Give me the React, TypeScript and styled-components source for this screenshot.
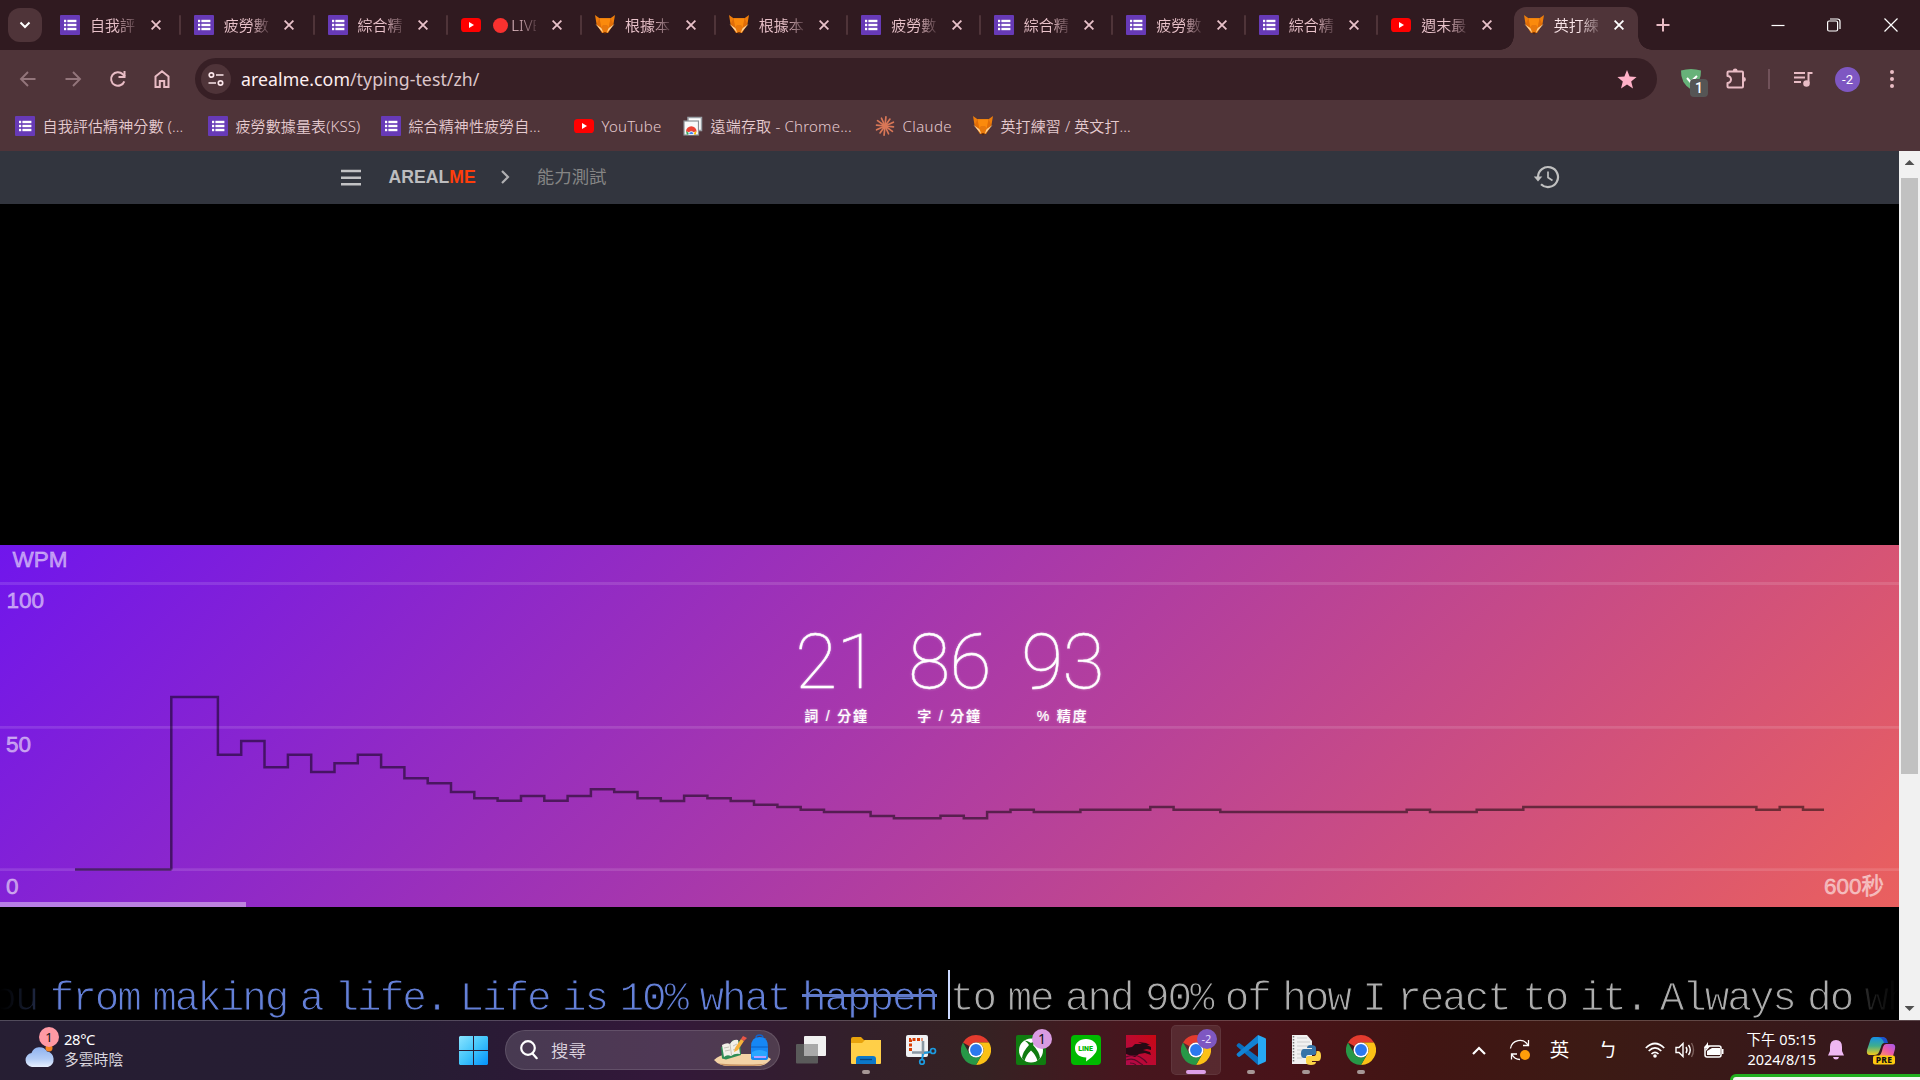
import React from "react";
import styled, { createGlobalStyle, css } from "styled-components";

const ui = `"Noto Sans", "Noto Sans CJK TC", sans-serif`;
const arial = `"Liberation Sans", "Noto Sans CJK TC", sans-serif`;

const Global = createGlobalStyle`
  * { box-sizing: border-box; }
  html, body { margin: 0; padding: 0; background: #000; overflow: hidden; }
  svg { display: block; flex: none; }
`;

const Screen = styled.div`
  position: relative;
  width: 1920px;
  height: 1080px;
  display: flex;
  flex-direction: column;
  overflow: hidden;
  font-family: ${ui};
  background: #000;
`;

/* ---------- browser chrome ---------- */

const TabStrip = styled.div`
  height: 50px;
  flex: none;
  display: flex;
  align-items: stretch;
  background: #301a20;
`;

const TabSearch = styled.div`
  width: 34px;
  height: 34px;
  margin: 8px 6px 0 8px;
  border-radius: 12px;
  background: #4f3439;
  display: flex;
  align-items: center;
  justify-content: center;
`;

const TabSlot = styled.div<{ $w: number; $sep?: boolean }>`
  width: ${(p) => p.$w}px;
  flex: none;
  padding: 0 1px 0 12px;
  display: flex;
  align-items: center;
  position: relative;
  &::after {
    content: "";
    display: ${(p) => (p.$sep ? "block" : "none")};
    width: 2px;
    height: 20px;
    margin-left: auto;
    border-radius: 1px;
    background: #4f3439;
  }
`;

const ActiveTab = styled.div`
  width: 124px;
  margin: 7px 0 0 2px;
  padding-left: 10px;
  display: flex;
  align-items: center;
  padding-bottom: 7px;
  flex: none;
  position: relative;
  background: #4f3439;
  border-radius: 12px 12px 0 0;
  &::before,
  &::after {
    content: "";
    position: absolute;
    bottom: 0;
    width: 14px;
    height: 14px;
  }
  &::before {
    left: -14px;
    background: radial-gradient(circle at 0 0, transparent 13.5px, #4f3439 14px);
  }
  &::after {
    right: -14px;
    background: radial-gradient(circle at 100% 0, transparent 13.5px, #4f3439 14px);
  }
`;

const TabTitle = styled.div<{ $active?: boolean }>`
  width: 45px;
  margin: 0 15.5px 0 10px;
  height: 24px;
  line-height: 24px;
  overflow: hidden;
  white-space: nowrap;
  font-size: 15px;
  font-weight: 350;
  color: ${(p) => (p.$active ? "#fbe6ea" : "#e9c2ca")};
  mask-image: linear-gradient(90deg, #000 60%, rgba(0, 0, 0, 0.2) 100%);
`;

const LiveDot = styled.i`
  display: inline-block;
  width: 15px;
  height: 15px;
  margin: 0 3px 0 2px;
  border-radius: 50%;
  background: #f8312f;
  vertical-align: -2px;
`;

const NewTab = styled.div`
  margin-left: 18.5px;
  display: flex;
  align-items: center;
`;

const WindowButtons = styled.div`
  margin-left: auto;
  padding: 0 22px 1px 0;
  display: flex;
  align-items: center;
  gap: 42.6px;
`;

const Toolbar = styled.div`
  height: 58px;
  flex: none;
  display: flex;
  align-items: center;
  background: #4f3439;
`;

const NavButtons = styled.div`
  width: 195px;
  padding-left: 17px;
  display: flex;
  gap: 22.8px;
  align-items: center;
`;

const Omnibox = styled.div`
  width: 1462px;
  height: 42px;
  border-radius: 21px;
  padding: 0 20px 0 6px;
  display: flex;
  align-items: center;
  background: #371f25;
`;

const SiteInfo = styled.div`
  width: 30px;
  height: 30px;
  border-radius: 50%;
  background: #4f3439;
  display: flex;
  align-items: center;
  justify-content: center;
`;

const Url = styled.div`
  flex: 1;
  margin-left: 10px;
  font-size: 17.7px;
  line-height: 24px;
  letter-spacing: 0.06px;
  color: #fdeef0;
  span {
    color: #dcc6ca;
  }
`;

const ToolbarTools = styled.div`
  flex: 1;
  display: flex;
  align-items: center;
  padding-left: 23px;
`;

const ShieldBox = styled.div`
  position: relative;
  width: 22px;
  height: 22px;
  margin-right: 23px;
`;

const ShieldCount = styled.div`
  position: absolute;
  left: 10px;
  top: 11px;
  width: 18px;
  height: 18px;
  border-radius: 4px;
  background: #555;
  color: #fff;
  font: 500 14px/18px Roboto, sans-serif;
  text-align: center;
`;

const ToolDivider = styled.div`
  width: 2px;
  height: 20px;
  margin: 0 23px 0 21px;
  background: #71525a;
`;

const Avatar = styled.div`
  width: 25px;
  height: 25px;
  margin: 0 22px;
  border-radius: 50%;
  background: #7e57c2;
  color: #fff;
  font: 400 13px/25px Roboto, sans-serif;
  text-align: center;
`;

const BookmarkBar = styled.div`
  height: 43px;
  flex: none;
  padding: 0 0 7px 15px;
  display: flex;
  align-items: center;
  background: #4f3439;
`;

const Bookmark = styled.div<{ $w: number; $ls: number }>`
  width: ${(p) => p.$w}px;
  flex: none;
  display: flex;
  align-items: center;
  gap: 7.5px;
  font-size: 15px;
  font-weight: 350;
  line-height: 22px;
  letter-spacing: ${(p) => p.$ls}px;
  white-space: nowrap;
  color: #e6cbd0;
`;

/* ---------- page ---------- */

const Viewport = styled.div`
  height: 869px;
  flex: none;
  display: flex;
`;

const Page = styled.main`
  width: 1899px;
  display: flex;
  flex-direction: column;
  background: #000;
`;

const SiteNav = styled.nav`
  height: 53px;
  flex: none;
  padding: 0 339px 1px 340.5px;
  display: flex;
  align-items: center;
  background: #32353e;
`;

const Brand = styled.div`
  margin: 0 25.5px 1px 28px;
  font: 700 17.6px/24px ${arial};
  letter-spacing: 0.05px;
  color: #bdbdbf;
  span {
    color: #ff3d0a;
  }
`;

const Crumb = styled.div`
  margin: 0 auto 1px 26.5px;
  font: 400 17.4px/24px ${arial};
  color: #858585;
`;

const AdSpace = styled.div`
  height: 341px;
  flex: none;
`;

const ChartPanel = styled.section`
  height: 362px;
  flex: none;
  display: grid;
  background: linear-gradient(135deg, #7016ec 0%, #ea605e 100%);
  > * {
    grid-area: 1 / 1;
  }
`;

const ChartSvg = styled.svg`
  width: 1899px;
  height: 362px;
  text {
    font: 400 22.5px ${arial};
    fill: rgba(255, 255, 255, 0.5);
    stroke: rgba(255, 255, 255, 0.4);
    stroke-width: 0.8px;
  }
`;

const Stats = styled.div`
  justify-self: center;
  align-self: start;
  padding-top: 71.5px;
  display: flex;
`;

const Stat = styled.div`
  width: 113px;
  display: flex;
  flex-direction: column;
  align-items: center;
  color: #fff;
  text-shadow: 0 0 3px rgba(255, 255, 255, 0.45);
  strong {
    font: 100 76.5px/90px Roboto, sans-serif;
    letter-spacing: -0.6px;
    -webkit-text-stroke: 0.4px #fff;
  }
  small {
    margin-top: -0.5px;
    font: 500 14px/20px "Liberation Sans", "Noto Sans CJK TC", sans-serif;
    -webkit-text-stroke: 0.2px #fff;
    letter-spacing: 1.8px;
    white-space: nowrap;
  }
`;

const Elapsed = styled.div`
  align-self: end;
  width: 246px;
  height: 5px;
  background: rgba(255, 255, 255, 0.42);
`;

const TypingLine = styled.div`
  margin-top: 63px;
  height: 50px;
  display: grid;
  grid-template-columns: 948px 2px 949px;
  white-space: pre;
  font: 400 41px/50px "Liberation Mono", monospace;
  letter-spacing: -2.1px;
  word-spacing: -10.05px;
  -webkit-text-stroke: 1.05px #000;
  overflow: hidden;
  mask-image: linear-gradient(
    90deg,
    transparent 0,
    rgba(0, 0, 0, 0.1) 15px,
    rgba(0, 0, 0, 0.3) 36px,
    #000 50px,
    #000 1848px,
    rgba(0, 0, 0, 0.25) 1864px,
    rgba(0, 0, 0, 0.1) 1884px,
    transparent 1899px
  );
`;

const Typed = styled.div`
  display: flex;
  justify-content: flex-end;
  padding: 4px 11px 0 0;
  overflow: hidden;
  color: #6480d8;
`;

const Missed = styled.span`
  position: relative;
  &::after {
    content: "";
    position: absolute;
    left: 0;
    right: 0;
    top: 20px;
    height: 3px;
    background: #5f79c9;
  }
`;

const Caret = styled.div`
  height: 49px;
  background: #cddaff;
`;

const Upcoming = styled.div`
  padding-top: 4px;
  overflow: hidden;
  color: #adadad;
`;

const Scrollbar = styled.div`
  width: 21px;
  display: flex;
  flex-direction: column;
  align-items: center;
  justify-content: space-between;
  background: #f1f1f1;
`;

const Thumb = styled.div`
  width: 17px;
  height: 596px;
  margin: -1px 0 auto;
  background: #c1c1c1;
`;

const Arrow = styled.div<{ $down?: boolean }>`
  width: 10px;
  height: 5px;
  margin: ${(p) => (p.$down ? "0 0 9px" : "9px 0 14px")};
  background: #505050;
  clip-path: ${(p) => (p.$down ? "polygon(0 0, 100% 0, 50% 100%)" : "polygon(50% 0, 100% 100%, 0 100%)")};
`;

/* ---------- taskbar ---------- */

const Taskbar = styled.footer`
  height: 60px;
  flex: none;
  display: flex;
  align-items: center;
  padding-bottom: 1px;
  border-top: 1px solid rgba(255, 255, 255, 0.2);
  background: linear-gradient(
    90deg,
    #261e33 0,
    #261d33 400px,
    #2c1936 540px,
    #33183a 660px,
    #33202a 860px,
    #352223 980px,
    #46161e 1120px,
    #481319 1280px,
    #411513 1420px,
    #3c1a14 1600px,
    #36181c 1860px,
    #33181e 1920px
  );
  color: #fff;
`;

const Weather = styled.div`
  width: 459px;
  padding-left: 24px;
  display: flex;
  gap: 8px;
  font-size: 14.8px;
  line-height: 20px;
`;

const WeatherIcon = styled.div`
  position: relative;
  width: 32px;
  height: 40px;
  padding-top: 12px;
`;

const WeatherBadge = styled.div`
  position: absolute;
  left: 15px;
  top: -3px;
  width: 20px;
  height: 20px;
  border-radius: 50%;
  background: #ff99a4;
  color: #111;
  font-size: 13px;
  line-height: 20px;
  text-align: center;
`;

const WeatherText = styled.div`
  margin-top: -1px;
  div:first-child {
    letter-spacing: -0.4px;
  }
  div + div {
    color: #d9d5dd;
  }
`;

const SearchBox = styled.div`
  width: 275px;
  height: 40px;
  margin: 0 3px 0 17px;
  padding: 0 7px 0 14px;
  border-radius: 20px;
  border: 1px solid rgba(255, 255, 255, 0.12);
  background: rgba(255, 255, 255, 0.14);
  display: flex;
  align-items: center;
  gap: 13px;
  font-size: 17.5px;
  line-height: 22px;
  font-weight: 350;
  color: #dcd3df;
  svg:last-child {
    margin-left: auto;
  }
`;

const AppButton = styled.div<{ $active?: boolean }>`
  position: relative;
  width: 55px;
  height: 50px;
  display: flex;
  align-items: center;
  justify-content: center;
  ${(p) =>
    p.$active &&
    css`
      width: 50px;
      margin: 0 2.5px;
      border-radius: 5px;
      background: rgba(255, 255, 255, 0.09);
      box-shadow: inset 0 0 0 1px rgba(255, 255, 255, 0.06);
    `}
`;

const Running = styled.div<{ $active?: boolean }>`
  position: absolute;
  bottom: 1px;
  width: ${(p) => (p.$active ? 20 : 8)}px;
  height: 4px;
  border-radius: 2px;
  background: ${(p) => (p.$active ? "#dda0e8" : "#a69796")};
`;

const AppBadge = styled.div<{ $dark?: boolean }>`
  position: absolute;
  left: ${(p) => (p.$dark ? 26 : 29)}px;
  top: 4px;
  width: 20px;
  height: 20px;
  border-radius: 50%;
  background: ${(p) => (p.$dark ? "#7e57c2" : "#d99be2")};
  color: ${(p) => (p.$dark ? "#e8dcff" : "#111")};
  font-size: ${(p) => (p.$dark ? 11 : 14)}px;
  line-height: 20px;
  text-align: center;
`;

const Tray = styled.div`
  margin-left: auto;
  display: flex;
  align-items: center;
`;

const TrayItem = styled.div<{ $w: number }>`
  width: ${(p) => p.$w}px;
  display: flex;
  justify-content: center;
  font-size: 19.5px;
  line-height: 28px;
`;

const Clock = styled.div`
  width: 85px;
  margin: -2px 9px 0 0;
  text-align: right;
  font-size: 14.5px;
  line-height: 20px;
  letter-spacing: -0.05px;
  white-space: nowrap;
`;

const Toast = styled.div`
  position: absolute;
  left: 1730px;
  top: 1074px;
  width: 200px;
  height: 20px;
  border: 3px solid #22b020;
  border-radius: 6px;
  background: #f6f8f5;
`;

/* ---------- icons ---------- */

const FormsIcon = () => (
  <svg width="20" height="20" viewBox="0 0 20 20">
    <rect width="20" height="20" rx="1" fill="#673ab7" />
    <g fill="#fff">
      <rect x="4" y="4.8" width="2.2" height="2.4" />
      <rect x="4" y="8.8" width="2.2" height="2.4" />
      <rect x="4" y="12.8" width="2.2" height="2.4" />
      <rect x="7.4" y="4.8" width="9" height="2.4" />
      <rect x="7.4" y="8.8" width="9" height="2.4" />
      <rect x="7.4" y="12.8" width="9" height="2.4" />
    </g>
  </svg>
);

const YoutubeIcon = () => (
  <svg width="20" height="20" viewBox="0 0 20 20">
    <rect y="3" width="20" height="14" rx="3.6" fill="#f00" />
    <path d="M8 7v6l5-3z" fill="#fff" />
  </svg>
);

const FoxIcon = () => (
  <svg width="20" height="20" viewBox="0 0 20 20">
    <path d="M0 0l4.500 3.200h11L20 0l-1.600 9.500-5.400 8.500h-6L1.600 9.500z" fill="#ee7d0c" />
    <path d="M4.500 3.200h11l-1.500 9L10 18 6 12.200z" fill="#fb8a0c" />
    <path d="M4.500 3.200L1.600 9.500 6.300 13zM15.500 3.200l2.900 6.300-4.700 3.500z" fill="#e06d08" />
    <path d="M.4 9L6.500 13.200 8.300 18zM19.600 9L13.500 13.200 11.700 18z" fill="#fbd39c" />
    <path d="M6 12.200L10 18l4-5.800L12 10H8z" fill="#e8780c" />
    <path d="M8.300 17.200h3.400L10.600 19.300H9.400z" fill="#5a2408" />
  </svg>
);

const RemoteIcon = () => (
  <svg width="20" height="20" viewBox="0 0 20 20">
    <rect x="5" y="1.500" width="13.500" height="13" fill="#fff" stroke="#9aa0a6" strokeWidth="1.500" />
    <rect x="1" y="5" width="14.500" height="14" fill="#f8f9fa" stroke="#8a8f94" strokeWidth="1.200" />
    <path d="M3 15.500a5.300 5.300 0 0110.600 0l-5.300 1z" fill="#ea4335" />
    <path d="M3 15L8 18.500H3.800z" fill="#34a853" />
    <path d="M13.600 15L8.500 18.500h4.300z" fill="#fbbc05" />
    <path d="M5.700 18.500a2.600 3 0 015.200 0z" fill="#4285f4" stroke="#fff" strokeWidth=".8" />
  </svg>
);

const ClaudeIcon = () => (
  <svg width="20" height="20" viewBox="0 0 20 20" stroke="#d97757" strokeWidth="1.700" strokeLinecap="round">
    {Array.from({ length: 12 }, (_, i) => {
      const a = (i * Math.PI) / 6 + 0.1;
      const r = i % 2 ? 9.2 : 8.5;
      return <line key={i} x1="10" y1="10" x2={10 + r * Math.cos(a)} y2={10 + r * Math.sin(a)} />;
    })}
  </svg>
);

const CloseIcon = ({ active = false }: { active?: boolean }) => (
  <svg width="10" height="10" viewBox="0 0 10 10" stroke={active ? "#fff" : "#e9c2ca"} strokeWidth="1.800">
    <path d="M.6.6l8.800 8.800M9.400.6L.6 9.400" />
  </svg>
);

const ChromeIcon = () => (
  <svg width="30" height="30" viewBox="0 0 48 48">
    <path d="M24 0a24 24 0 0120.800 12H24a12 12 0 00-10.400 6L3.200 12A24 24 0 0124 0z" fill="#e33b2e" />
    <path d="M44.800 12A24 24 0 0124 48l10.400-18A12 12 0 0034.400 18 12 12 0 0024 12z" fill="#fbc116" />
    <path d="M3.200 12l10.400 18A12 12 0 0024 36a12 12 0 0010.400-6L24 48A24 24 0 013.200 12z" fill="#279847" />
    <circle cx="24" cy="24" r="12" fill="#fff" />
    <circle cx="24" cy="24" r="9.500" fill="#2b78ee" />
  </svg>
);

const CloudIcon = () => (
  <svg width="31" height="26" viewBox="0 0 31 26">
    <defs>
      <linearGradient id="cloud" x1="0" y1="0" x2="0" y2="1">
        <stop offset="0" stopColor="#8fb2ee" />
        <stop offset=".6" stopColor="#b4cdf6" />
        <stop offset="1" stopColor="#e8f0ff" />
      </linearGradient>
    </defs>
    <circle cx="25" cy="6" r="3.500" fill="#f58220" />
    <path d="M8 25a7 7 0 01-.5-13.900A8.500 8.500 0 0123 9.500 8 8 0 0124 25z" fill="url(#cloud)" />
  </svg>
);

const StartIcon = () => (
  <svg width="29" height="29" viewBox="0 0 29 29">
    <defs>
      <linearGradient id="win" x1="0" y1="0" x2="1" y2="1">
        <stop offset="0" stopColor="#8ae4ff" />
        <stop offset=".5" stopColor="#41c4fb" />
        <stop offset="1" stopColor="#0391fb" />
      </linearGradient>
    </defs>
    <path d="M1 0h13v14H0V1zM15 0h13l1 1v13H15zM0 15h14v14H1l-1-1zM15 15h14v13l-1 1H15z" fill="url(#win)" />
  </svg>
);

const SearchArt = () => (
  <svg width="58" height="32" viewBox="0 0 58 32">
    <path d="M0 26Q5 21 14 20h30q8 1 13 5-5 7-14 7H16Q5 32 0 26z" fill="#f3d3a6" />
    <path d="M4 29.500q24 2 48 0-5 2.500-12 2.500H16q-7 0-12-2.500z" fill="#c99565" />
    <path d="M7 13l9-3 3-4 7 1 1 14-15 4.500-4-1z" fill="#2f8d56" />
    <path d="M8 11q5-3 8-1 3-5 8-4l2 14q-5-1-9 2-4-2-7 1z" fill="#f2f0e8" />
    <path d="M16 10l1.500 11M10 14l5-1M11 17l5-1M19 12l4-2M19 16l5-2" stroke="#b9b5aa" strokeWidth=".8" />
    <path d="M21 14l6-9 3 2-6 9-4 2z" fill="#f6b13c" />
    <path d="M27 5l2-3 4 2-3 3z" fill="#ea5546" />
    <path d="M42 4q0-3 3.500-3T49 4" fill="none" stroke="#1462c8" strokeWidth="1.500" />
    <path d="M37 13q0-10 8.500-10T54 13v11q0 2-3 2H40q-3 0-3-2z" fill="#1687f5" />
    <path d="M38 18q7.500-4 15 0v5H38z" fill="#29a6ff" />
    <path d="M37 13h17" stroke="#0c5cc0" />
    <path d="M40 23h12" stroke="#b8a0ff" strokeWidth="2" />
  </svg>
);

const TaskViewIcon = () => (
  <svg width="30" height="30" viewBox="0 0 30 30">
    <rect x="8" y="1" width="22" height="20" rx="1" fill="#f1f1f1" />
    <rect x="0" y="9" width="22" height="19.500" rx="1" fill="#5a5a5a" />
    <rect x="8" y="9" width="14" height="12" fill="#a9a9a9" />
  </svg>
);

const FolderIcon = () => (
  <svg width="30" height="30" viewBox="0 0 30 30">
    <path d="M0 4q0-2 2-2h8l3 3h15q2 0 2 2v4H0z" fill="#e8a30c" />
    <path d="M0 8h11l3-3h16v23q0 1-1 1H1q-1 0-1-1z" fill="#ffcf48" />
    <path d="M5 29v-5q0-3 3-3h14q3 0 3 3v5z" fill="#0c78c8" />
    <path d="M9 24.500h12" stroke="#06447e" strokeWidth="1.300" />
  </svg>
);

const SnipIcon = () => (
  <svg width="32" height="30" viewBox="0 0 32 30">
    <rect x="1" y="0" width="22" height="22" rx="2" fill="#f0f2f4" />
    <path d="M5.500 16V4.500h12" fill="none" stroke="#d83b01" strokeWidth="3" strokeDasharray="3 1.500" />
    <path d="M18 6v14M7 17.500h16" stroke="#8b98a3" strokeWidth="2.600" fill="none" />
    <path d="M19 18l7-1M18 19l-1 6" stroke="#1c9be0" strokeWidth="2" />
    <circle cx="28" cy="16" r="2.500" fill="none" stroke="#1c9be0" strokeWidth="1.700" />
    <circle cx="17" cy="27" r="2.300" fill="none" stroke="#1c9be0" strokeWidth="1.700" />
  </svg>
);

const XboxIcon = () => (
  <svg width="30" height="30" viewBox="0 0 30 30">
    <rect width="30" height="30" rx="2" fill="#107c10" />
    <circle cx="15" cy="15.500" r="12" fill="#fff" />
    <path
      d="M7.500 5.500Q11 5 15 8q4-3 7.500-2.500-2.500 0-5.500 4.500 6.500 7 7 13l-2.500 3Q20 20 15 15.500 10 20 8.500 26L6 23q.5-6 7-13-3-4.500-5.500-4.500z"
      fill="#107c10"
    />
  </svg>
);

const LineBox = styled.div`
  width: 30px;
  height: 30px;
  border-radius: 4px;
  background: #00b900;
  display: grid;
  place-items: center;
  > * {
    grid-area: 1 / 1;
  }
  span {
    font: 900 7px/8px Roboto, sans-serif;
    color: #00b900;
    margin-top: -3px;
  }
`;

const LineIcon = () => (
  <LineBox>
    <svg width="24" height="24" viewBox="0 0 24 24">
      <path d="M12 1c6.500 0 11 4 11 9.200 0 5-5.500 9.300-11 13.300l.3-4C5.500 19.500 1 15.500 1 10.200 1 5 5.500 1 12 1z" fill="#fff" />
    </svg>
    <span>LINE</span>
  </LineBox>
);

const DragonIcon = () => (
  <svg width="30" height="30" viewBox="0 0 30 30">
    <defs>
      <linearGradient id="drg" x1="0" y1="1" x2="1" y2="0">
        <stop offset="0" stopColor="#b00a4c" />
        <stop offset="1" stopColor="#c80812" />
      </linearGradient>
    </defs>
    <rect width="30" height="30" fill="url(#drg)" />
    <path d="M0 13l6-1 3-3 7 0-4-2 8 1 4 2-3 0 4 2v3l-4-1-4 1 7 2 1 3-6-2-6 1-4 3-9-3z" fill="#260a14" />
    <path d="M0 22q9-3 14 0t7 6M0 25q7-2 11 1t6 4M4 28q4 0 6 2" stroke="#5a0a28" strokeWidth="1.200" fill="none" />
  </svg>
);

const CodeIcon = () => (
  <svg width="30" height="30" viewBox="0 0 30 30">
    <path d="M22 0v30L1 11.500q-1-1 0-2l1-1q1-.8 2 0L22 22z" fill="#0a6fbe" />
    <path d="M22 30V0L1 18.500q-1 1 0 2l1 1q1 .8 2 0L22 8z" fill="#1283d4" />
    <path d="M22 0l7 3q1 .4 1 1.500v21q0 1-1 1.500l-7 3z" fill="#27a9f3" />
  </svg>
);

const PythonIcon = () => (
  <svg width="30" height="30" viewBox="0 0 30 30">
    <path d="M1 0h15l5 6v23H1z" fill="#f1f1f1" />
    <path d="M2.500 1v27" stroke="#777" strokeWidth="1.500" strokeDasharray="1.500 1.500" />
    <path d="M6 3h10M6 7h13M6 11h13M6 15h9M6 19h5M6 23h5" stroke="#cdcdcd" />
    <path d="M20 10q5 0 5 3v5q0 2-3 2h-5q-2 0-2 3h-2q-3 0-3-4.500T13 14h8v-1h-5q0-3 4-3z" fill="#3774a8" />
    <path d="M20 30q-5 0-5-3v-4q0-2 3-2h5q2.500 0 2.500-5H27q3 0 3 5t-3 5h-6v1h4q0 3-5 3z" fill="#fdd446" />
  </svg>
);

const CopilotIcon = () => (
  <svg width="30" height="30" viewBox="0 0 30 30">
    <defs>
      <linearGradient id="cpA" x1="0" y1="0" x2="0" y2="1">
        <stop offset="0" stopColor="#168fe6" />
        <stop offset=".5" stopColor="#3fae8c" />
        <stop offset="1" stopColor="#f6cb1a" />
      </linearGradient>
      <linearGradient id="cpB" x1="1" y1="0" x2="0" y2="1">
        <stop offset="0" stopColor="#a259f0" />
        <stop offset=".5" stopColor="#ec5aa8" />
        <stop offset="1" stopColor="#ff9a5a" />
      </linearGradient>
    </defs>
    <path d="M8 2h8q4 0 5 6-5-1-6 4l-2 5q-1 3-5 3H4q-4 0-3-5L4 6q1-4 4-4z" fill="url(#cpA)" />
    <path d="M12 2h5q4 0 5 6h-4q-1-5-6-6z" fill="#1c52cf" />
    <path d="M20 9h6q4 0 3 5l-2 7H13q2-1 3-5l1-4q1-3 3-3z" fill="url(#cpB)" />
    <rect x="7" y="20.500" width="22" height="9" rx="2" fill="#fdc90f" />
    <text x="18" y="28.200" fontSize="8.500" fontWeight="800" textAnchor="middle" fill="#111" fontFamily="Noto Sans" letterSpacing=".3">PRE</text>
  </svg>
);

/* ---------- data ---------- */

type Fav = "form" | "yt" | "fox" | "remote" | "claude";
const favicon: Record<Fav, React.ReactNode> = {
  form: <FormsIcon />,
  yt: <YoutubeIcon />,
  fox: <FoxIcon />,
  remote: <RemoteIcon />,
  claude: <ClaudeIcon />,
};

const tabs: { icon: Fav; title: string; live?: boolean }[] = [
  { icon: "form", title: "自我評" },
  { icon: "form", title: "疲勞數" },
  { icon: "form", title: "綜合精" },
  { icon: "yt", title: "LIVE", live: true },
  { icon: "fox", title: "根據本" },
  { icon: "fox", title: "根據本" },
  { icon: "form", title: "疲勞數" },
  { icon: "form", title: "綜合精" },
  { icon: "form", title: "疲勞數" },
  { icon: "form", title: "綜合精" },
  { icon: "yt", title: "週末最" },
];

const bookmarks: { icon: Fav; label: string; w: number; ls: number }[] = [
  { icon: "form", label: "自我評估精神分數 (...", w: 193, ls: 0.14 },
  { icon: "form", label: "疲勞數據量表(KSS)", w: 173, ls: 0.12 },
  { icon: "form", label: "綜合精神性疲勞自...", w: 193, ls: 0.1 },
  { icon: "yt", label: "YouTube", w: 109, ls: 0.2 },
  { icon: "remote", label: "遠端存取 - Chrome...", w: 192, ls: 0.2 },
  { icon: "claude", label: "Claude", w: 98, ls: 0.4 },
  { icon: "fox", label: "英打練習 / 英文打...", w: 170, ls: 0.1 },
];

// Each entry is [interval index, chart y]; the speed holds until the next entry.
const speed: [number, number][] = [
  [0, 152], [2, 209.7], [3, 196], [4, 222.3], [5, 209.7], [6, 227], [7, 218.3], [8, 209.7],
  [9, 222.3], [10, 233.3], [11, 238.3], [12, 247], [13, 253.3], [14, 255.7], [15, 251],
  [16, 255.7], [17, 251], [18, 244.3], [19, 247], [20, 253.3], [21, 256], [22, 250.7],
  [23, 253.3], [24, 256], [25, 259.7], [26, 262], [27, 264.7], [28, 267], [30, 271],
  [31, 273.3], [33, 270.7], [34, 273.3], [35, 267], [36, 264.7], [37, 267], [39, 264.7],
  [42, 262], [43, 264.7], [45, 267], [53, 264.7], [54, 267], [56, 264.7], [58, 262],
  [68, 264.7], [69, 262], [70, 264.7],
];
const speedPath =
  "M75 324.500H171.500" + speed.map(([k, y]) => `H${(171.3 + k * 23.31).toFixed(1)}V${y}`).join("") + "H1824";

const stats = [
  ["21", "詞 / 分鐘"],
  ["86", "字 / 分鐘"],
  ["93", "% 精度"],
];

/* ---------- app ---------- */

const pink = "#e9bcc5";

export default function App() {
  return (
    <Screen>
      <Global />
      <TabStrip>
        <TabSearch>
          <svg width="12" height="8" viewBox="0 0 12 8" fill="none" stroke="#fff" strokeWidth="2">
            <path d="M1.500 1.500L6 6l4.500-4.500" />
          </svg>
        </TabSearch>
        {tabs.map((t, i) => (
          <TabSlot key={i} $w={i < 5 ? 133.75 : 132.5} $sep={i < 10}>
            {favicon[t.icon]}
            <TabTitle>
              {t.live && <LiveDot />}
              {t.title}
            </TabTitle>
            <CloseIcon />
          </TabSlot>
        ))}
        <ActiveTab>
          <FoxIcon />
          <TabTitle $active>英打練</TabTitle>
          <CloseIcon active />
        </ActiveTab>
        <NewTab>
          <svg width="14" height="14" viewBox="0 0 14 14" stroke={pink} strokeWidth="2">
            <path d="M7 .5v13M.5 7h13" />
          </svg>
        </NewTab>
        <WindowButtons>
          <svg width="14" height="14" viewBox="0 0 14 14" stroke="#fff" strokeWidth="1.200">
            <path d="M.5 7.500h13" />
          </svg>
          <svg width="14" height="14" viewBox="0 0 14 14" fill="none" stroke="#fff" strokeWidth="1.200">
            <rect x=".6" y="3" width="10" height="10" rx="1.500" />
            <path d="M3 1h7.500q2.500 0 2.500 2.500V11" />
          </svg>
          <svg width="14" height="14" viewBox="0 0 14 14" stroke="#fff" strokeWidth="1.200">
            <path d="M.5.5l13 13M13.500.5l-13 13" />
          </svg>
        </WindowButtons>
      </TabStrip>

      <Toolbar>
        <NavButtons>
          <svg width="22" height="22" viewBox="0 0 22 22" fill="none" stroke="#93757b" strokeWidth="1.900">
            <path d="M18.500 11H4M11 4l-7 7 7 7" />
          </svg>
          <svg width="22" height="22" viewBox="0 0 22 22" fill="none" stroke="#93757b" strokeWidth="1.900">
            <path d="M3.500 11H18M11 4l7 7-7 7" />
          </svg>
          <svg width="22" height="22" viewBox="0 0 22 22" fill="none" stroke={pink} strokeWidth="2">
            <path d="M17.300 13.300A6.800 6.800 0 1115.800 6.200L18 8.500" />
            <path d="M17.500 3v6h-6" />
          </svg>
          <svg width="22" height="22" viewBox="0 0 22 22" fill="none" stroke={pink} strokeWidth="2">
            <path d="M4.500 19V8.500L11 3.300l6.500 5.200V19h-4.300v-6H8.800v6z" />
          </svg>
        </NavButtons>
        <Omnibox>
          <SiteInfo>
            <svg width="16" height="16" viewBox="0 0 16 16" fill="none" stroke="#fbe6ea" strokeWidth="1.700">
              <circle cx="3.400" cy="4" r="2.200" />
              <path d="M8 4h7.500M.5 12H8" />
              <circle cx="12.500" cy="12" r="2.200" />
            </svg>
          </SiteInfo>
          <Url>
            arealme.com<span>/typing-test/zh/</span>
          </Url>
          <svg width="20" height="20" viewBox="0 0 20 20" fill="#ffb1c8">
            <path d="M10 1l2.600 6.500 7 .5-5.400 4.500 1.800 6.900L10 15.600 4 19.400l1.800-6.900L.4 8l7-.5z" />
          </svg>
        </Omnibox>
        <ToolbarTools>
          <ShieldBox>
            <svg width="22" height="22" viewBox="0 0 22 22">
              <path d="M1 2.500Q6 1 11 1t10 1.500Q21.500 15 11 21.500.5 15 1 2.500z" fill="#67b279" />
              <path d="M7 10l3.500 4L17 8" fill="none" stroke="#fff" strokeWidth="2" />
            </svg>
            <ShieldCount>1</ShieldCount>
          </ShieldBox>
          <svg width="22" height="22" viewBox="0 0 22 22" fill="none" stroke={pink} strokeWidth="2" strokeLinejoin="round">
            <path d="M2.500 8V4.500a1 1 0 011-1H17a1 1 0 011 1v14a1 1 0 01-1 1H3.500a1 1 0 01-1-1V15a3.500 3.500 0 000-7z" />
            <path d="M7.800 3a2.400 2.400 0 014.800 0zM18.500 9a2.400 2.400 0 010 4.800z" fill={pink} stroke="none" />
          </svg>
          <ToolDivider />
          <svg width="20" height="20" viewBox="0 0 20 20" fill="none" stroke={pink} strokeWidth="2">
            <path d="M1 4h11M1 8.500h11M1 13h7M15.500 14V4h4" />
            <circle cx="13.500" cy="14.500" r="2.300" fill={pink} />
          </svg>
          <Avatar>-2</Avatar>
          <svg width="20" height="20" viewBox="0 0 20 20" fill={pink}>
            <circle cx="10" cy="3" r="2" />
            <circle cx="10" cy="10" r="2" />
            <circle cx="10" cy="17" r="2" />
          </svg>
        </ToolbarTools>
      </Toolbar>

      <BookmarkBar>
        {bookmarks.map((b) => (
          <Bookmark key={b.label} $w={b.w} $ls={b.ls}>
            {favicon[b.icon]}
            {b.label}
          </Bookmark>
        ))}
      </BookmarkBar>

      <Viewport>
        <Page>
          <SiteNav>
            <svg width="20" height="17" viewBox="0 0 20 17" stroke="#c2c2c4" strokeWidth="2.400">
              <path d="M0 2h20M0 8.700h20M0 15.300h20" />
            </svg>
            <Brand>
              AREAL<span>ME</span>
            </Brand>
            <svg width="9" height="14" viewBox="0 0 9 14" fill="none" stroke="#b0b0b2" strokeWidth="2.200">
              <path d="M1 1l6 6-6 6" />
            </svg>
            <Crumb>能力測試</Crumb>
            <svg width="27" height="24" viewBox="0 0 27 24" fill="none" stroke="#c0c0c0" strokeWidth="2.200">
              <path d="M5 12a10 10 0 113 7.200" />
              <path d="M.8 11.500h8.500L5 16.500z" fill="#c0c0c0" stroke="none" />
              <path d="M15 6.500v6l4.500 3" strokeWidth="1.700" />
            </svg>
          </SiteNav>
          <AdSpace />
          <ChartPanel>
            <ChartSvg viewBox="0 0 1899 362">
              <path d="M0 38.500H1899M0 182.300H1899M0 324.600H1899" stroke="rgba(255,255,255,.12)" strokeWidth="2.800" />
              <path d={speedPath} fill="none" stroke="rgba(0,0,0,.5)" strokeWidth="2.500" />
              <text x="12.500" y="22">WPM</text>
              <text x="6.500" y="63">100</text>
              <text x="6" y="206.500">50</text>
              <text x="6" y="349">0</text>
              <text x="1884" y="349" textAnchor="end">600秒</text>
            </ChartSvg>
            <Stats>
              {stats.map(([value, label]) => (
                <Stat key={value}>
                  <strong>{value}</strong>
                  <small>{label}</small>
                </Stat>
              ))}
            </Stats>
            <Elapsed />
          </ChartPanel>
          <TypingLine>
            <Typed>
              ou from making a life. Life is 10% what <Missed>happen</Missed>
            </Typed>
            <Caret />
            <Upcoming>to me and 90% of how I react to it. Always do wh</Upcoming>
          </TypingLine>
        </Page>
        <Scrollbar>
          <Arrow />
          <Thumb />
          <Arrow $down />
        </Scrollbar>
      </Viewport>

      <Taskbar>
        <Weather>
          <WeatherIcon>
            <CloudIcon />
            <WeatherBadge>1</WeatherBadge>
          </WeatherIcon>
          <WeatherText>
            <div>28°C</div>
            <div>多雲時陰</div>
          </WeatherText>
        </Weather>
        <StartIcon />
        <SearchBox>
          <svg width="18" height="20" viewBox="0 0 18 20" fill="none" stroke="#fff" strokeWidth="2.200" strokeLinecap="round">
            <circle cx="8" cy="8" r="6.800" />
            <path d="M12.500 13.500l4.200 4.700" />
          </svg>
          搜尋
          <SearchArt />
        </SearchBox>
        <AppButton><TaskViewIcon /></AppButton>
        <AppButton><FolderIcon /><Running /></AppButton>
        <AppButton><SnipIcon /></AppButton>
        <AppButton><ChromeIcon /></AppButton>
        <AppButton><XboxIcon /><AppBadge>1</AppBadge></AppButton>
        <AppButton><LineIcon /></AppButton>
        <AppButton><DragonIcon /></AppButton>
        <AppButton $active><ChromeIcon /><AppBadge $dark>-2</AppBadge><Running $active /></AppButton>
        <AppButton><CodeIcon /><Running /></AppButton>
        <AppButton><PythonIcon /><Running /></AppButton>
        <AppButton><ChromeIcon /><Running /></AppButton>
        <Tray>
          <TrayItem $w={40}>
            <svg width="14" height="9" viewBox="0 0 14 9" fill="none" stroke="#fff" strokeWidth="2.200">
              <path d="M1 8l6-6 6 6" />
            </svg>
          </TrayItem>
          <TrayItem $w={41}>
            <svg width="22" height="22" viewBox="0 0 22 22" fill="none" stroke="#fff" strokeWidth="1.300">
              <path d="M1.500 9.500A9.500 9.500 0 0119 6M19.500 1v5.500H14M11 20.500A9 9 0 013 15.500M2.500 20.500v-5.500H8" />
              <circle cx="16" cy="16" r="5" fill="#ff9d0a" stroke="none" />
            </svg>
          </TrayItem>
          <TrayItem $w={39}>英</TrayItem>
          <TrayItem $w={58}>ㄅ</TrayItem>
          <TrayItem $w={36}>
            <svg width="20" height="16" viewBox="0 0 20 16" fill="none" stroke="#fff" strokeWidth="1.700">
              <path d="M.8 6q9.200-9 18.400 0M3.700 9q6.300-6.200 12.600 0M6.500 12q3.500-3.300 7 0" />
              <circle cx="10" cy="14" r="1.800" fill="#fff" stroke="none" />
            </svg>
          </TrayItem>
          <TrayItem $w={24}>
            <svg width="20" height="16" viewBox="0 0 20 16" fill="none" stroke="#fff" strokeWidth="1.400">
              <path d="M1 5.500h3L8 1.500v13L4 10.500H1z" />
              <path d="M11 5q2 3 0 6M13.500 3q3.500 5 0 10" />
              <path d="M16.500 1q4 7 0 14" stroke="#7b5f5b" />
            </svg>
          </TrayItem>
          <TrayItem $w={34}>
            <svg width="20" height="16" viewBox="0 0 20 16">
              <rect x="1" y="4" width="16" height="11" rx="2" fill="none" stroke="#fff" strokeWidth="1.500" />
              <path d="M8 6h8v7H3V9z" fill="#fff" />
              <path d="M18 7h1.500v5H18zM4 0L0 6h2.500L1 10l5.500-6H4z" fill="#fff" />
            </svg>
          </TrayItem>
          <Clock>
            <div>下午 05:15</div>
            <div>2024/8/15</div>
          </Clock>
          <TrayItem $w={22}>
            <svg width="16" height="20" viewBox="0 0 16 20" fill="#efb8f3">
              <path d="M8 0q6 0 6 7v4l2 4.500H0L2 11V7q0-7 6-7zM5 17h6q-.5 2.500-3 2.500T5 17z" />
            </svg>
          </TrayItem>
          <TrayItem $w={67}>
            <CopilotIcon />
          </TrayItem>
          <TrayItem $w={6} />
        </Tray>
      </Taskbar>
      <Toast />
    </Screen>
  );
}
